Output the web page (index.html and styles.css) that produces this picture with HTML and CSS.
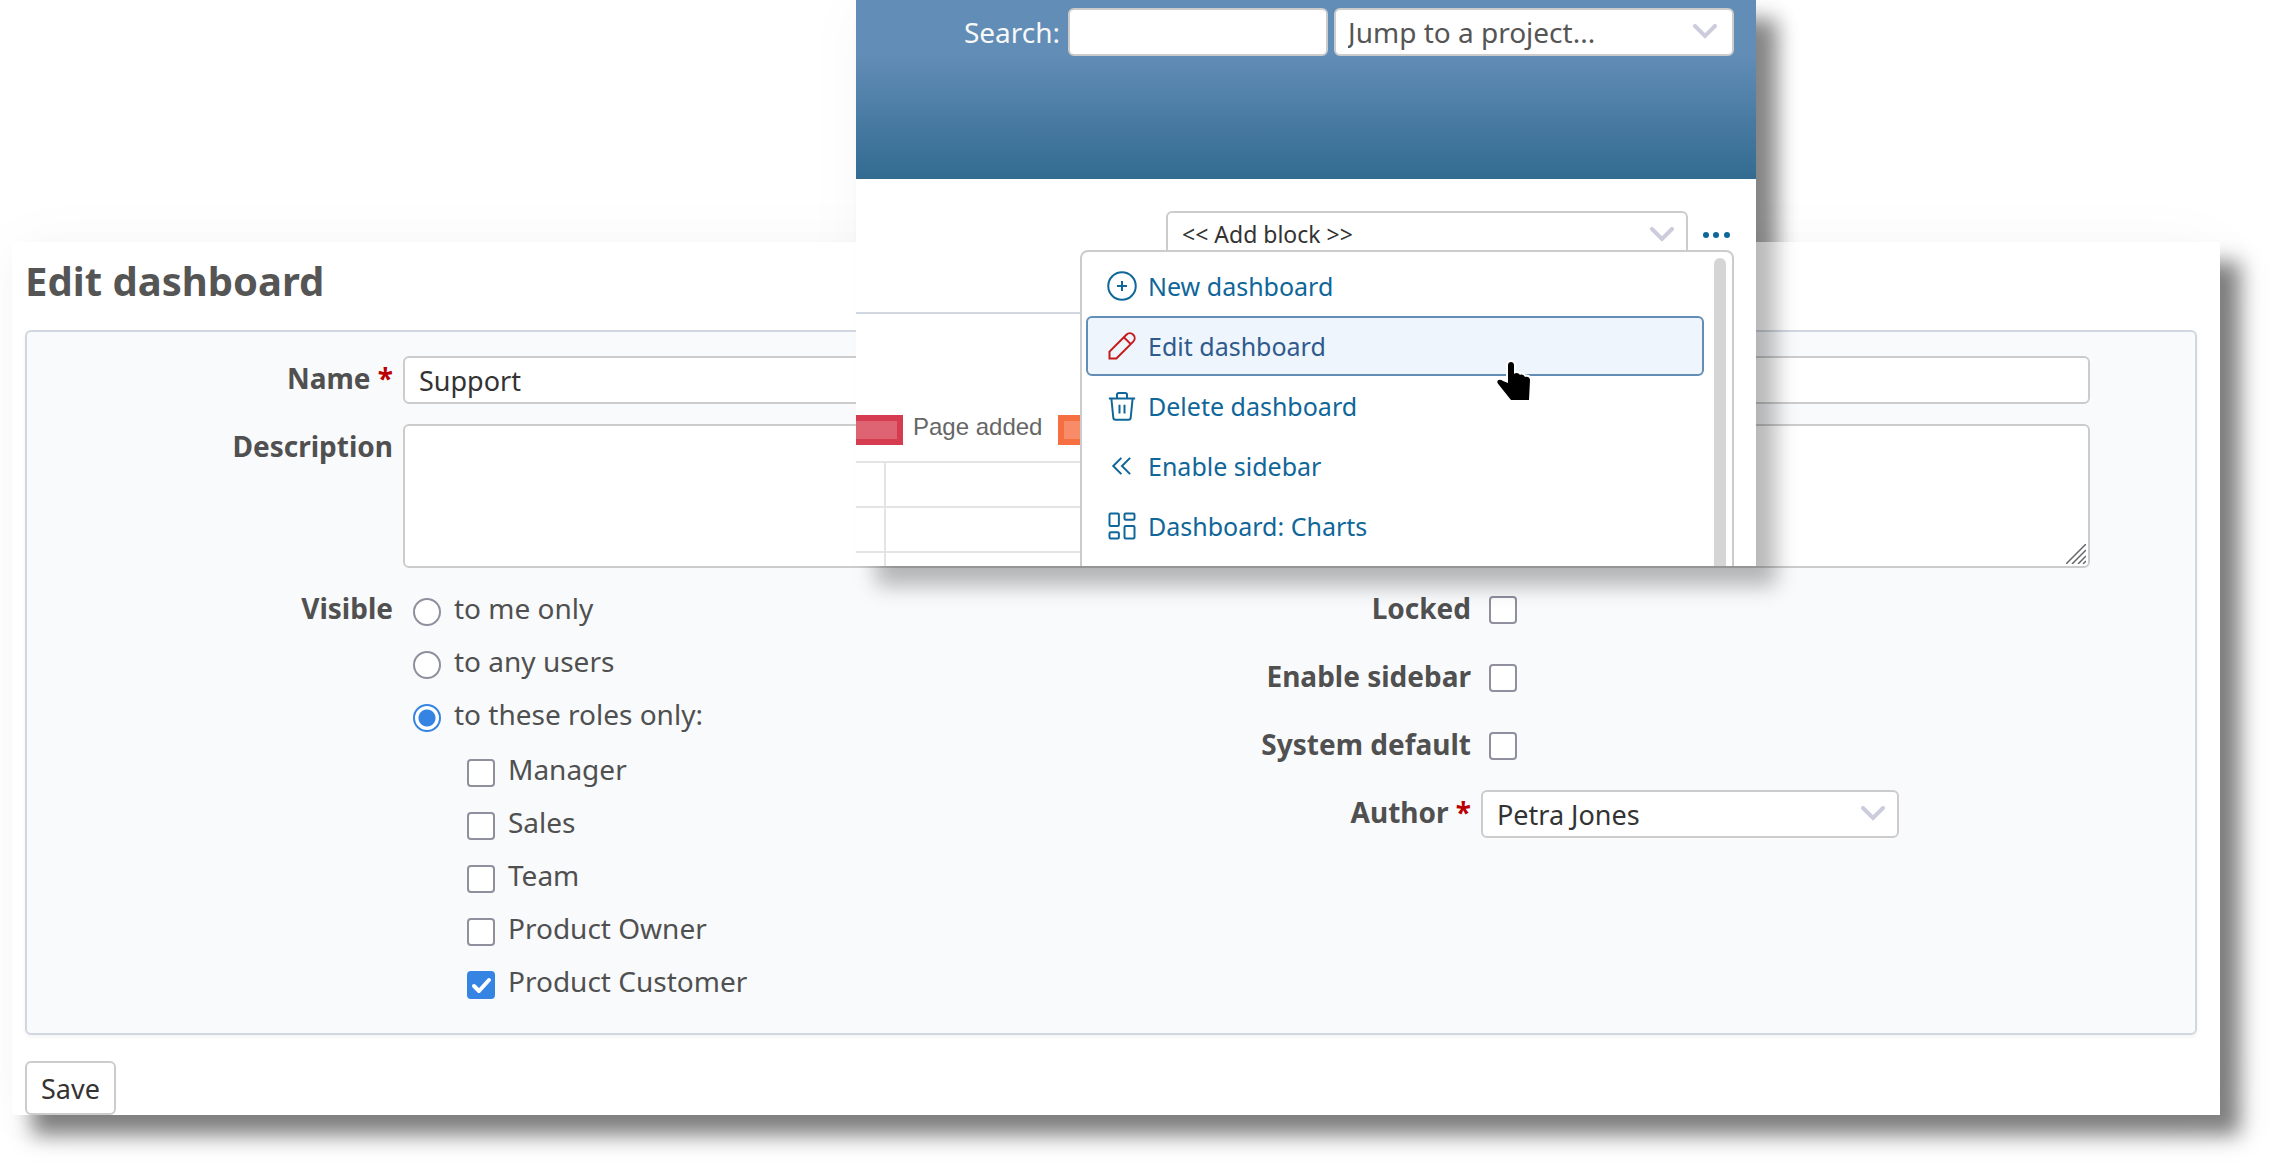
FILE: index.html
```html
<!DOCTYPE html>
<html lang="en">
<head>
  <meta charset="UTF-8">
  <meta name="viewport" content="width=device-width, initial-scale=1.0">
  <title>Edit dashboard</title>
  <link rel="stylesheet" href="styles.css">
</head>
<body>
  <main class="sheet">
    <h2>Edit dashboard</h2>

    <form id="dashboardForm">
      <div class="box">
        <div class="row wide">
          <label class="name" for="dashboardName">Name <span class="required">*</span></label>
          <input type="text" id="dashboardName" name="name" value="Support">
        </div>
        <div class="row wide">
          <label class="name" for="dashboardDescription">Description</label>
          <textarea id="dashboardDescription" name="description"></textarea>
        </div>

        <div class="split">
          <div class="row">
            <span class="name" id="visibleLabel">Visible</span>
            <div class="options" role="group" aria-labelledby="visibleLabel">
              <label class="option"><input type="radio" name="visibility" value="0">to me only</label>
              <label class="option"><input type="radio" name="visibility" value="2">to any users</label>
              <label class="option"><input type="radio" name="visibility" value="1" checked>to these roles only:</label>
              <div class="options roles">
                <label class="option"><input type="checkbox" name="roles">Manager</label>
                <label class="option"><input type="checkbox" name="roles">Sales</label>
                <label class="option"><input type="checkbox" name="roles">Team</label>
                <label class="option"><input type="checkbox" name="roles">Product Owner</label>
                <label class="option"><input type="checkbox" name="roles" checked>Product Customer</label>
              </div>
            </div>
          </div>

          <div class="settings">
            <div class="row">
              <label class="name" for="locked">Locked</label>
              <input type="checkbox" id="locked" name="locked">
            </div>
            <div class="row">
              <label class="name" for="enableSidebar">Enable sidebar</label>
              <input type="checkbox" id="enableSidebar" name="enable_sidebar">
            </div>
            <div class="row">
              <label class="name" for="systemDefault">System default</label>
              <input type="checkbox" id="systemDefault" name="system_default">
            </div>
            <div class="row">
              <label class="name" for="author">Author <span class="required">*</span></label>
              <select id="author" name="author"><option>Petra Jones</option></select>
            </div>
          </div>
        </div>
      </div>

      <button type="submit">Save</button>
    </form>
  </main>

  <section class="popup">
    <div class="popup-content">
      <header class="top-bar">
        <label for="search">Search:</label>
        <input type="text" id="search" name="q">
        <select class="project-jump" aria-label="Project"><option>Jump to a project...</option></select>
      </header>

      <div class="toolbar">
        <select class="add-block" aria-label="Add block"><option>&lt;&lt; Add block &gt;&gt;</option></select>
        <button type="button" class="more" aria-label="Actions">
          <svg width="28" height="8" viewBox="0 0 28 8" fill="#0f6699">
            <circle cx="4" cy="4" r="3"/><circle cx="14" cy="4" r="3"/><circle cx="25" cy="4" r="3"/>
          </svg>
        </button>
      </div>

      <div class="chart">
        <div class="legend">
          <span class="swatch red"></span>
          <span class="legend-text">Page added</span>
          <span class="swatch orange"></span>
        </div>
        <svg class="grid-lines" height="105" stroke="#e4e4e4" stroke-width="2">
          <line x1="0" y1="1" x2="100%" y2="1"/>
          <line x1="0" y1="46" x2="100%" y2="46"/>
          <line x1="0" y1="91" x2="100%" y2="91"/>
          <line x1="29" y1="0" x2="29" y2="106"/>
        </svg>
      </div>

      <nav class="menu">
        <a href="#">
          <svg viewBox="0 0 24 24"><circle cx="12" cy="12" r="11"/><path d="M8 12h8M12 8v8"/></svg>
          New dashboard
        </a>
        <a href="#" class="selected">
          <svg class="edit-icon" viewBox="0 0 24 24"><path d="M2 22h5.500L21 8.500a3.700 3.700 0 0 0-5.500-5.500L2 16.500zM13.500 5l5.500 5.500"/></svg>
          Edit dashboard
        </a>
        <a href="#">
          <svg viewBox="0 0 24 24"><path d="M1.500 6h21M3.500 6l1.500 15a2 2 0 0 0 2 2h10a2 2 0 0 0 2-2L20.500 6M8 6V3a1.500 1.500 0 0 1 1.500-1.500h5A1.500 1.500 0 0 1 16 3v3M10 11v7M14 11v7"/></svg>
          Delete dashboard
        </a>
        <a href="#">
          <svg viewBox="0 0 24 24"><path d="M11.500 5.500l-6.500 6.500l6.500 6.500M18.500 5.500l-6.500 6.500l6.500 6.500"/></svg>
          Enable sidebar
        </a>
        <a href="#">
          <svg viewBox="0 0 24 24"><rect x="2" y="2" width="7.500" height="10" rx="1"/><rect x="14" y="2" width="8" height="5" rx="1"/><rect x="2" y="17" width="7.500" height="5" rx="1"/><rect x="14" y="12" width="8" height="10" rx="1"/></svg>
          Dashboard: Charts
        </a>
        <span class="scrollbar"></span>
        <svg class="cursor" width="40" height="44" viewBox="0 0 40 44">
          <path d="M14 6c0-4 6-4 6 0v9c2-2 5-1 6 1c2-1 4 0 5 2c2-1 5 0 5 3l-1 20H17L5 26c-4-4 0-7 4-4l5 2z" fill="#000" stroke="#fff" stroke-width="4" stroke-linejoin="round" paint-order="stroke"/>
        </svg>
      </nav>
    </div>
  </section>
</body>
</html>
```

FILE: styles.css
```css
* {
  box-sizing: border-box;
}

body {
  margin: 0;
  font-family: "Noto Sans", sans-serif;
  font-size: 28px;
  color: #505050;
  background-color: #fff;
}

.sheet {
  margin: 242px 52px 52px 12px;
  padding: 13px 23px 0 13px;
  background-color: #fff;
  box-shadow: 20px 20px 20px rgba(0, 0, 0, 0.5), 0 0 60px rgba(0, 0, 0, 0.03);
}

h2 {
  margin: 0 0 23px;
  font-size: 40px;
  line-height: 52px;
  color: #555;
}

input,
textarea,
select,
button {
  margin: 0;
  font-family: inherit;
  font-size: 27px;
  color: #333;
}

input[type="text"],
textarea,
select {
  height: 48px;
  padding: 0 14px;
  border: 2px solid #ccc;
  border-radius: 6px;
  background-color: #fff;
}

textarea {
  display: block;
  height: 144px;
  resize: none;
  background: #fff url("data:image/svg+xml,%3Csvg xmlns='http://www.w3.org/2000/svg' width='20' height='20' stroke='%23666' stroke-width='1.5'%3E%3Cpath d='M0 20L20 0M6 20L20 6M12 20L20 12M17 20L20 17'/%3E%3C/svg%3E") no-repeat right 2px bottom 2px;
}

select {
  appearance: none;
  background: #fff url("data:image/svg+xml,%3Csvg xmlns='http://www.w3.org/2000/svg' width='24' height='16' fill='none' stroke='%23ccccdd' stroke-width='4'%3E%3Cpath d='M2 2l10 10L22 2' stroke-linecap='round'/%3E%3C/svg%3E") no-repeat right 12px center;
}

input[type="radio"],
input[type="checkbox"] {
  appearance: none;
  flex: none;
  width: 28px;
  height: 28px;
  border: 2px solid #8f8f9d;
  border-radius: 4px;
  background-color: #fff;
}

input[type="radio"] {
  border-radius: 50%;
}

input[type="radio"]:checked {
  border-color: #3584e4;
  background-image: radial-gradient(circle, #3584e4 8px, #fff 9px);
}

input[type="checkbox"]:checked {
  border-color: #3584e4;
  background: #3584e4 url("data:image/svg+xml,%3Csvg xmlns='http://www.w3.org/2000/svg' width='24' height='24' fill='none' stroke='white' stroke-width='4'%3E%3Cpath d='M5 13l5 5L20 7' stroke-linecap='round' stroke-linejoin='round'/%3E%3C/svg%3E") no-repeat center;
}

.box {
  padding: 24px 12px 30px 0;
  border: 2px solid #d0d7e0;
  border-radius: 6px;
  background-color: #f9fafc;
  box-shadow: 0 2px 4px rgba(0, 0, 0, 0.05);
}

.row {
  display: grid;
  grid-template-columns: 366px 1fr;
  column-gap: 10px;
}

.wide {
  margin-bottom: 20px;
  padding-right: 93px;
}

.wide + .split {
  margin-top: -2px;
}

.name {
  font-weight: bold;
  line-height: 44px;
  text-align: right;
}

.required {
  color: #b00;
}

.split {
  display: grid;
  grid-template-columns: 1fr 1fr;
}

.options {
  display: flex;
  flex-direction: column;
  gap: 9px;
}

.option {
  display: flex;
  align-items: center;
  gap: 13px;
  margin-left: 10px;
  line-height: 44px;
}

.option input {
  margin-top: 8px;
}

.roles {
  margin: 2px 0 0 54px;
}

.settings {
  display: flex;
  flex-direction: column;
  gap: 20px;
}

.settings .row {
  min-height: 48px;
}

.settings input {
  margin: 10px 8px;
}

.settings select {
  width: 418px;
}

button[type="submit"] {
  display: block;
  height: 54px;
  margin-top: 26px;
  padding: 0 14px;
  border: 2px solid #ccc;
  border-radius: 6px;
  background-color: #fff;
}

/* actions popup lying over the form */
.popup {
  position: absolute;
  top: 0;
  left: 856px;
  width: 900px;
  box-shadow: 20px 20px 20px rgba(0, 0, 0, 0.28);
}

/* second shadow, hidden where the sheet covers it */
.popup::before {
  content: "";
  position: absolute;
  inset: 0;
  z-index: -1;
  box-shadow: 20px 20px 20px rgba(0, 0, 0, 0.28), 0 0 60px rgba(0, 0, 0, 0.03);
}

.popup-content {
  position: relative;
  overflow: hidden;
  background-color: #fff;
}

.top-bar {
  display: flex;
  justify-content: flex-end;
  align-items: flex-start;
  height: 179px;
  padding: 8px 22px;
  line-height: 48px;
  color: #f8f8f8;
  background: linear-gradient(#628db6 30%, #336b90);
}

.top-bar input {
  width: 260px;
  margin: 0 6px 0 8px;
}

.top-bar .project-jump {
  width: 400px;
  padding: 0 12px;
  font-size: 28px;
  color: #555;
  background-position: right 15px center;
}

.toolbar {
  display: flex;
  justify-content: flex-end;
  align-items: center;
  gap: 14px;
  padding: 32px 26px 53px 0;
}

.add-block {
  width: 522px;
  padding-bottom: 2px;
  font-size: 23px;
}

.more {
  display: flex;
  padding: 0;
  border: none;
  background: none;
}

.chart {
  margin-right: 44px;
  padding-top: 101px;
  border-top: 2px solid #d0d7e0;
}

.legend {
  display: flex;
  gap: 10px;
  height: 30px;
  margin-bottom: 16px;
  font-family: "Liberation Sans", sans-serif;
  font-size: 24px;
  color: #666;
}

.legend-text {
  line-height: 24px;
}

.swatch {
  width: 47px;
  border: 6px solid #d63c4f;
  border-left: none;
  background-color: #de6473;
}

.orange {
  width: 80px;
  margin-left: 6px;
  border-left: 6px solid #f66f42;
  border-color: #f66f42;
  background-color: #f88c69;
}

.grid-lines {
  display: block;
  width: 100%;
}

.menu {
  position: absolute;
  top: 250px;
  right: 22px;
  width: 654px;
  height: 400px;
  padding: 4px 28px 0 4px;
  border: 2px solid #ccc;
  border-radius: 8px;
  background-color: #fff;
}

.menu a {
  display: flex;
  align-items: center;
  gap: 11px;
  height: 60px;
  padding: 0 19px;
  border: 2px solid transparent;
  border-radius: 6px;
  font-size: 25px;
  color: #0f6699;
  text-decoration: none;
}

.menu a svg {
  width: 30px;
  height: 30px;
  fill: none;
  stroke: currentColor;
  stroke-width: 1.6;
}

.menu .selected {
  border-color: #628db6;
  background-color: #eef5fd;
  color: #2f5a8c;
}

.menu .edit-icon {
  stroke: #c61a1a;
}

.scrollbar {
  position: absolute;
  top: 6px;
  right: 6px;
  bottom: 0;
  width: 12px;
  border-radius: 6px;
  background-color: #d5d5d5;
}

.cursor {
  position: absolute;
  top: 107px;
  left: 412px;
}
```
